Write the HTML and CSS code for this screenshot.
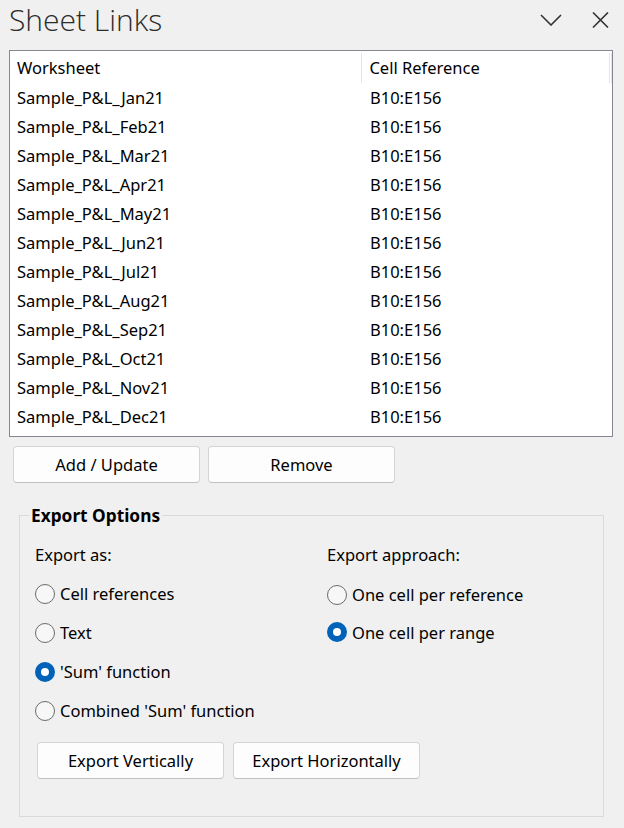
FILE: index.html
```html
<!DOCTYPE html>
<html lang="en">
<head>
    <meta charset="UTF-8">
    <meta name="viewport" content="width=device-width, initial-scale=1.0">
    <title>Sheet Links</title>
    <link rel="stylesheet" href="styles.css">
</head>
<body>
    <div class="pane">
        <div class="pane-header">
            <h1 class="pane-title">Sheet Links</h1>
            <div class="pane-controls">
                <button class="icon-btn" title="Options">
                    <svg width="22" height="12" viewBox="0 0 22 12"><path d="M1 1 L11 11 L21 1" fill="none" stroke="#333" stroke-width="1.6"/></svg>
                </button>
                <button class="icon-btn" title="Close">
                    <svg width="17" height="16" viewBox="0 0 17 16"><path d="M1 0.5 L16 15.5 M16 0.5 L1 15.5" fill="none" stroke="#333" stroke-width="1.6"/></svg>
                </button>
            </div>
        </div>

        <div class="list">
            <div class="list-head">
                <div class="col col-sheet">Worksheet</div>
                <div class="col col-ref">Cell Reference</div>
                <div class="col col-fill"></div>
            </div>
            <div class="list-body" id="rows"></div>
        </div>

        <div class="btn-row">
            <button class="btn">Add / Update</button>
            <button class="btn">Remove</button>
        </div>

        <fieldset class="group">
            <legend>Export Options</legend>
            <div class="group-cols">
                <div class="opt-col">
                    <div class="opt-label">Export as:</div>
                    <label class="radio"><input type="radio" name="as"><span class="dot"></span>Cell references</label>
                    <label class="radio"><input type="radio" name="as"><span class="dot"></span>Text</label>
                    <label class="radio"><input type="radio" name="as" checked><span class="dot"></span>'Sum' function</label>
                    <label class="radio"><input type="radio" name="as"><span class="dot"></span>Combined 'Sum' function</label>
                </div>
                <div class="opt-col opt-col-right">
                    <div class="opt-label">Export approach:</div>
                    <label class="radio"><input type="radio" name="approach"><span class="dot"></span>One cell per reference</label>
                    <label class="radio"><input type="radio" name="approach" checked><span class="dot"></span>One cell per range</label>
                </div>
            </div>
            <div class="btn-row export-row">
                <button class="btn">Export Vertically</button>
                <button class="btn">Export Horizontally</button>
            </div>
        </fieldset>
    </div>

    <script>
        const months = ["Jan", "Feb", "Mar", "Apr", "May", "Jun", "Jul", "Aug", "Sep", "Oct", "Nov", "Dec"];
        const rows = document.getElementById("rows");

        months.forEach((m) => {
            const row = document.createElement("div");
            row.className = "list-row";
            row.innerHTML = `<div class="col col-sheet">Sample_P&amp;L_${m}21</div><div class="col col-ref">B10:E156</div>`;
            rows.appendChild(row);
        });
    </script>
</body>
</html>
```

FILE: styles.css
```css
body {
    margin: 0;
    background: #f0f0f0;
    font-family: "Noto Sans", "Open Sans", sans-serif;
    font-size: 16.5px;
    color: #000;
}

.pane {
    padding: 0 11px 0 9px;
}

.pane-header {
    display: flex;
    align-items: center;
    justify-content: space-between;
    height: 40px;
    margin-bottom: 10px;
}

.pane-title {
    margin: 0;
    font-family: "Open Sans", sans-serif;
    font-weight: 300;
    font-size: 30px;
    color: #2b2b2b;
    line-height: 40px;
}

.pane-controls {
    display: flex;
    align-items: center;
    gap: 30px;
    padding-right: 4px;
}

.icon-btn {
    background: none;
    border: none;
    padding: 0;
    display: flex;
    align-items: center;
}

/* worksheet list */
.list {
    background: #fff;
    border: 1px solid #828790;
    height: 385px;
    overflow: hidden;
}

.list-head,
.list-row {
    display: flex;
}

.list-head {
    height: 32px;
    align-items: center;
    padding-top: 1px;
    box-sizing: border-box;
}

.list-head .col {
    border-right: 1px solid #e5e5e5;
    height: 30px;
    display: flex;
    align-items: center;
}

.list-head .col-fill {
    flex: 0 0 2px;
    padding: 0;
}

.list-row {
    height: 29px;
    align-items: center;
}

.col {
    padding-left: 7px;
    box-sizing: border-box;
}

.col-sheet {
    width: 353px;
}

.col-ref {
    width: 248px;
}

/* buttons */
.btn-row {
    display: flex;
    gap: 8px;
    margin: 9px 0 0 4px;
}

.btn {
    width: 187px;
    height: 37px;
    background: #fdfdfd;
    border: 1px solid #d4d4d4;
    border-bottom-color: #c2c2c2;
    border-radius: 4px;
    font-family: inherit;
    font-size: 16.5px;
    color: #000;
    padding: 0;
}

/* export options group */
.group {
    margin: 21px 9px 0 10px;
    padding: 0 15px 36px 15px;
    border: 1px solid #dadada;
    height: 313px;
    min-width: 0;
    box-sizing: border-box;
}

.group legend {
    font-weight: bold;
    font-size: 17.3px;
    padding: 0 2px;
    margin-left: -6px;
}

.group-cols {
    display: flex;
    margin-top: 15px;
}

.opt-col {
    display: flex;
    flex-direction: column;
    width: 292px;
    flex: none;
}

.opt-col-right {
    flex: 1;
    width: auto;
}

.opt-label {
    height: 26px;
    line-height: 26px;
    margin-bottom: 6px;
}

.radio {
    display: flex;
    align-items: center;
    height: 39px;
    gap: 5px;
}

.opt-col-right .radio {
    height: 37.5px;
}

.opt-col-right .opt-label {
    margin-bottom: 8px;
}

.radio input {
    display: none;
}

.dot {
    width: 18px;
    height: 18px;
    border: 1px solid #6b6b6b;
    border-radius: 50%;
    background: #f7f7f7;
    box-sizing: content-box;
    flex: none;
}

.radio input:checked + .dot {
    width: 8px;
    height: 8px;
    border: 6px solid #0062b8;
    background: #fff;
}

.export-row {
    margin: 12px 0 0 2px;
    gap: 9px;
}
```
